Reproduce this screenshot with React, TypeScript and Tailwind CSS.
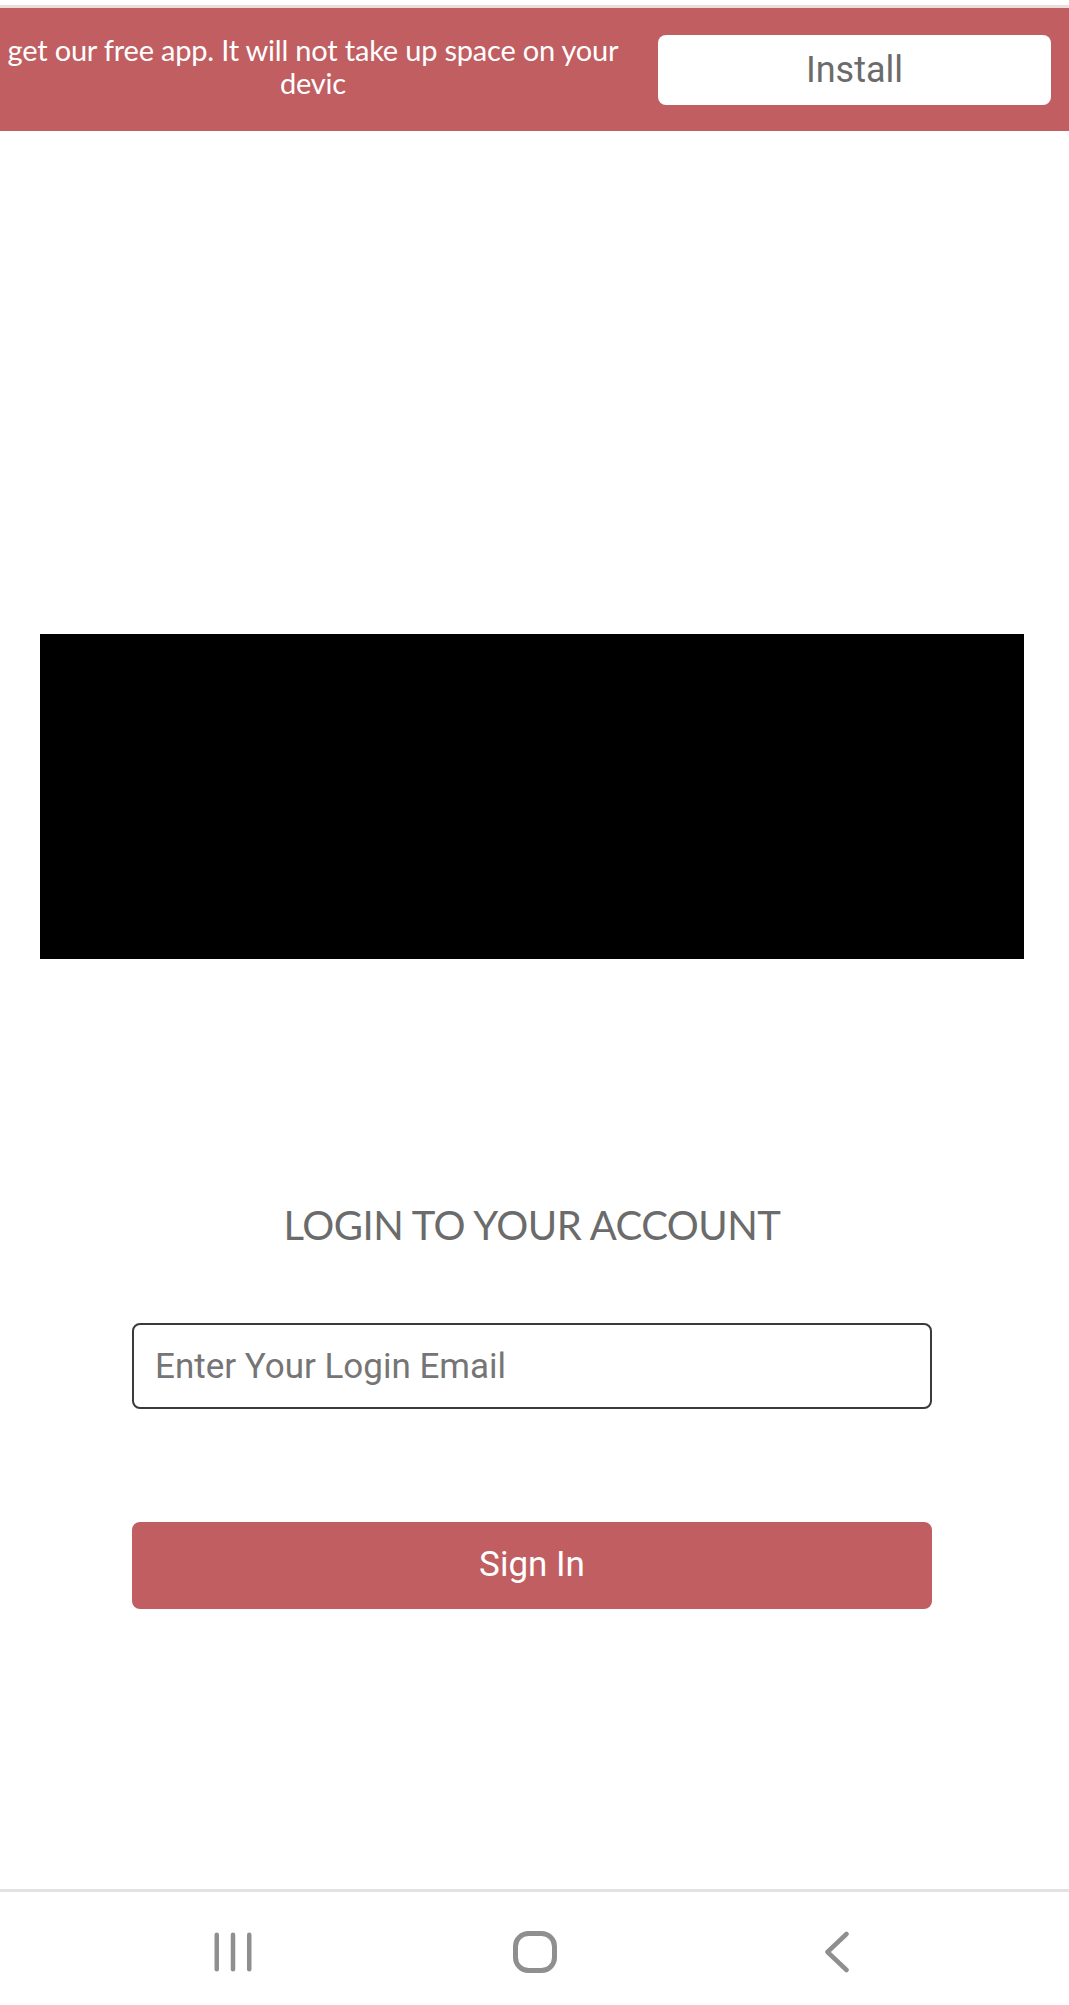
const RecentsIcon = () => (
  <svg width="40" height="40" viewBox="0 0 40 40" fill="none">
    <rect x="1.5" y="0.5" width="4.5" height="39" rx="2.25" fill="#8f8f8f" />
    <rect x="17.75" y="0.5" width="4.5" height="39" rx="2.25" fill="#8f8f8f" />
    <rect x="34" y="0.5" width="4.5" height="39" rx="2.25" fill="#8f8f8f" />
  </svg>
);

const HomeIcon = () => (
  <svg width="44" height="42" viewBox="0 0 44 42" fill="none">
    <rect x="2.5" y="2.5" width="39" height="37" rx="13" stroke="#8f8f8f" strokeWidth="5" />
  </svg>
);

const BackIcon = () => (
  <svg width="26" height="42" viewBox="0 0 26 42" fill="none">
    <path d="M22.5 3 L3.5 21 L22.5 39" stroke="#8f8f8f" strokeWidth="4.5" strokeLinecap="round" strokeLinejoin="round" />
  </svg>
);

const App = () => {
  return (
    <div className="w-[1069px] h-[2005px] flex flex-col bg-white overflow-hidden">
      {/* status strip */}
      <div className="h-[5px] bg-white" />
      <div className="h-[3px] bg-[#ecdcdc]" />

      {/* install banner */}
      <div className="h-[123px] bg-[#c05e61] flex items-center">
        <p className="w-[626px] pb-[7px] text-center text-white text-[29px] leading-[33px] font-['Lato',sans-serif] tracking-[-0.2px]">
          <span className="whitespace-nowrap">get our free app. It will not take up space on your</span>
          <br />
          devic
        </p>
        <button className="ml-[32px] w-[393px] h-[70px] rounded-[8px] bg-white text-[#6b6b6b] text-[36px] leading-[64px] font-['Roboto',sans-serif]">
          Install
        </button>
      </div>

      {/* login */}
      <div className="flex-1 flex flex-col items-center pr-[5px]">
        <div className="mt-[503px] self-start ml-[40px] w-[984px] h-[325px] bg-black" />

        <h1 className="mt-[242px] h-[48px] leading-[48px] text-[40px] text-[#6b6b6b] font-['Lato',sans-serif] tracking-[-0.5px]">
          LOGIN TO YOUR ACCOUNT
        </h1>

        <input
          type="email"
          placeholder="Enter Your Login Email"
          className="mt-[74px] w-[800px] h-[86px] rounded-[8px] border-2 border-[#3a3a3a] px-[21px] text-[35px] font-['Roboto',sans-serif] placeholder:text-[#757575] outline-none"
        />

        <button className="mt-[113px] w-[800px] h-[87px] rounded-[8px] bg-[#c05e61] text-white text-[35px] font-['Roboto',sans-serif]">
          Sign In
        </button>
      </div>

      {/* android nav bar */}
      <div className="h-[116px] border-t-[3px] border-[#e2e2e2] flex justify-center items-center pt-[7px]">
        <div className="w-[302px] flex justify-center">
          <RecentsIcon />
        </div>
        <div className="w-[302px] flex justify-center">
          <HomeIcon />
        </div>
        <div className="w-[302px] flex justify-center">
          <BackIcon />
        </div>
      </div>
    </div>
  );
};

export default App;
